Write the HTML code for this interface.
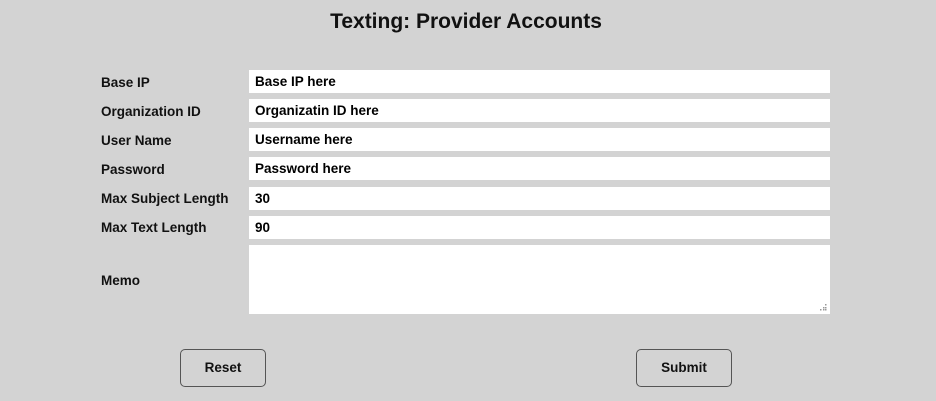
<!DOCTYPE html>
<html><head><style>
body{margin:0;width:936px;height:401px;background:#d3d3d3;font-family:"Liberation Sans",sans-serif;position:relative;overflow:hidden}
h1{position:absolute;top:10px;left:0;width:932px;text-align:center;margin:0;font-size:21px;font-weight:bold;color:#111}
.l{position:absolute;left:101px;font-size:13.5px;font-weight:bold;color:#111}
.i{position:absolute;left:249px;width:581px;height:23px;background:#fff;font-size:13.5px;font-weight:bold;line-height:23px;box-sizing:border-box;padding-left:6px;color:#000}
.b{position:absolute;top:349px;height:38px;border:1px solid #555;border-radius:5px;box-sizing:border-box;text-align:center;line-height:36px;font-size:13.5px;font-weight:bold;color:#111}
</style></head><body>
<h1>Texting: Provider Accounts</h1>
<div class="l" style="top:75px">Base IP</div><div class="i" style="top:70px">Base IP here</div>
<div class="l" style="top:104px">Organization ID</div><div class="i" style="top:99px">Organizatin ID here</div>
<div class="l" style="top:133px">User Name</div><div class="i" style="top:128px">Username here</div>
<div class="l" style="top:162px">Password</div><div class="i" style="top:157px">Password here</div>
<div class="l" style="top:191px">Max Subject Length</div><div class="i" style="top:187px">30</div>
<div class="l" style="top:220px">Max Text Length</div><div class="i" style="top:216px">90</div>
<div class="l" style="top:273px">Memo</div><div class="i" style="top:245px;height:69px">
<svg style="position:absolute;right:3px;bottom:3px" width="7" height="7"><g fill="#999"><rect x="5" y="0" width="1.5" height="1.5"/><rect x="3" y="3" width="1.5" height="1.5"/><rect x="5" y="3" width="1.5" height="1.5"/><rect x="0" y="5" width="1.5" height="1.5"/><rect x="3" y="5" width="1.5" height="1.5"/><rect x="5" y="5" width="1.5" height="1.5"/></g></svg></div>
<div class="b" style="left:180px;width:86px">Reset</div>
<div class="b" style="left:636px;width:96px">Submit</div>
</body></html>
